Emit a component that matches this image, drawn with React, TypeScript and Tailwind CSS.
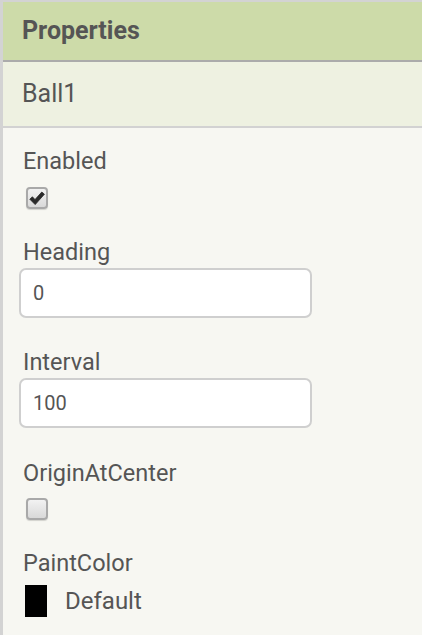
import React from "react";

const font = { fontFamily: "Roboto, 'Liberation Sans', sans-serif" };

function Check({ checked }: { checked?: boolean }) {
  return (
    <div className="w-[22px] h-[22px] ml-[3px] rounded-[4px] border-2 border-[#a9a9a9] bg-gradient-to-b from-[#f2f2f2] to-[#d9d9d9] shadow-[0_1px_1px_rgba(0,0,0,0.15)] flex items-center justify-center">
      {checked && (
        <svg width="16" height="15" viewBox="0 0 16 15">
          <path d="M0.8 8.2 L3.4 5.8 L6 8.6 L12.8 1 L15.4 3.2 L6.2 13.6 Z" fill="#2a2a2a" stroke="#2a2a2a" strokeWidth="0.8" strokeLinejoin="round" />
        </svg>
      )}
    </div>
  );
}

function Label({ text }: { text: string }) {
  return <div className="h-7 leading-[31px] text-[23.5px] text-[#555]">{text}</div>;
}

function TextBox({ value }: { value: string }) {
  return (
    <div className="w-[293px] h-[50px] rounded-[7px] border-2 border-[#cfcfcf] bg-white flex items-center pl-[12px] text-[20px] text-[#555]">
      {value}
    </div>
  );
}

export default function App() {
  return (
    <div style={font} className="w-[422px] h-[635px] border-t-2 border-l-[3px] border-[#d3d3d3] bg-[#f7f7f2] overflow-hidden">
      <div className="h-[58px] bg-[#cddba9] border-b-2 border-[#ababab] flex items-center pl-[19px] box-content">
        <span className="text-[25px] font-bold text-[#555]">Properties</span>
      </div>
      <div className="h-[64px] bg-[#eef1e1] border-b-2 border-[#d2d2d2] flex items-center pl-[19px] box-content">
        <span className="text-[25px] text-[#555]">Ball1</span>
      </div>
      <div className="pl-5 pt-[18px] flex flex-col">
        <Label text="Enabled" />
        <div className="mt-[13px]">
          <Check checked />
        </div>
        <div className="mt-[28px]">
          <Label text="Heading" />
        </div>
        <div className="mt-[3px] -ml-[4px]">
          <TextBox value="0" />
        </div>
        <div className="mt-[29px]">
          <Label text="Interval" />
        </div>
        <div className="mt-[3px] -ml-[4px]">
          <TextBox value="100" />
        </div>
        <div className="mt-[30px]">
          <Label text="OriginAtCenter" />
        </div>
        <div className="mt-[12px]">
          <Check />
        </div>
        <div className="mt-[28px]">
          <Label text="PaintColor" />
        </div>
        <div className="mt-[7px] flex items-center">
          <div className="w-[22px] h-[32px] ml-[2px] bg-black" />
          <span className="ml-[18px] text-[24px] text-[#555]">Default</span>
        </div>
      </div>
    </div>
  );
}
